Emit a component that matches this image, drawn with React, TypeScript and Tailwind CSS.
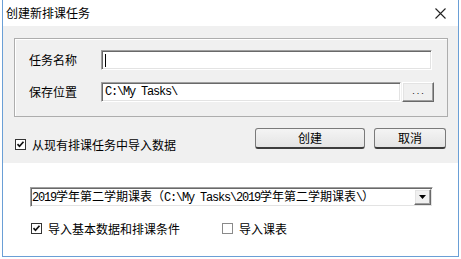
import React from "react";

const cjk = { fontFamily: '"Noto Sans CJK SC", "Microsoft YaHei", sans-serif' };

function Mono({ children }: { children: React.ReactNode }) {
  return (
    <span className="tracking-[-1.2px]" style={{ fontFamily: '"Liberation Mono", monospace' }}>
      {children}
    </span>
  );
}

function Check({ checked }: { checked: boolean }) {
  return (
    <div
      className={`w-[11px] h-[11px] bg-white border flex items-center justify-center shrink-0 ${
        checked ? "border-[#333333]" : "border-[#8a8a8a]"
      }`}
    >
      {checked && (
        <svg width="9" height="9" viewBox="0 0 9 9">
          <path d="M1.5 4.2 L3.5 6.3 L7.5 1.8" stroke="#111" strokeWidth="1.7" fill="none" />
        </svg>
      )}
    </div>
  );
}

const sunken =
  "bg-white border border-t-[#a0a0a0] border-l-[#a0a0a0] border-b-white border-r-white shadow-[inset_1px_1px_0_#696969,inset_-1px_-1px_0_#e3e3e3]";

const raised =
  "bg-[#f0f0f0] border border-t-white border-l-white border-b-[#696969] border-r-[#696969] shadow-[inset_-1px_-1px_0_#a0a0a0,inset_1px_1px_0_#e3e3e3]";

export default function App() {
  return (
    <div className="w-[461px] h-[259px] bg-white text-[12px] text-black leading-none" style={cjk}>
      <div className="ml-[2px] w-[457px] h-[257px] border-l border-r border-b border-[#6a9fd6] flex flex-col">
        {/* title bar */}
        <div className="h-[26px] bg-white flex items-center justify-between pl-[3px] pr-[12px]">
          <span className="text-[12px] leading-none">创建新排课任务</span>
          <svg width="11" height="11" viewBox="0 0 11 11">
            <path d="M0.5 0.5 L10.5 10.5 M10.5 0.5 L0.5 10.5" stroke="#222" strokeWidth="1.1" />
          </svg>
        </div>

        {/* gray section */}
        <div className="h-[137px] bg-[#f0f0f0] flex flex-col">
          <div className="ml-[11px] mt-[12px] w-[434px] h-[79px] border border-[#adadad] shadow-[inset_1px_1px_0_#fff] flex flex-col pt-[11px] pl-[14px]">
            <div className="flex items-center h-[20px]">
              <span className="w-[72px]">任务名称</span>
              <div className={`w-[331px] h-[20px] ${sunken} flex items-center pl-[3px]`}>
                <div className="w-[1px] h-[13px] bg-black" />
              </div>
            </div>
            <div className="flex items-center h-[20px] mt-[12px]">
              <span className="w-[72px]">保存位置</span>
              <div className={`w-[300px] h-[20px] ${sunken} flex items-center pl-[3px] text-[12px]`}>
                <Mono>C:\My Tasks\</Mono>
              </div>
              <div className={`ml-[1px] w-[32px] h-[20px] ${raised} flex items-center justify-center`}>
                <span className="text-[9px] tracking-[2px] pl-[2px] -mt-[2px] text-black" style={{ fontFamily: '"Liberation Sans", sans-serif' }}>
                  ...
                </span>
              </div>
            </div>
          </div>

          <div className="flex">
            <div className="ml-[12px] mt-[22px] flex items-center h-[11px]">
              <Check checked />
              <span className="ml-[6px]">从现有排课任务中导入数据</span>
            </div>
            <div className="ml-[79px] mt-[11px] flex gap-[9px]">
              <div className="w-[110px] h-[21px] rounded-[3px] border border-[#7a7a7a] border-b-2 border-b-[#3c3c3c] bg-gradient-to-b from-[#f4f4f4] to-[#e4e4e4] flex items-center justify-center">
                创建
              </div>
              <div className="w-[72px] h-[21px] rounded-[3px] border border-[#7a7a7a] border-b-2 border-b-[#3c3c3c] bg-gradient-to-b from-[#f4f4f4] to-[#e4e4e4] flex items-center justify-center">
                取消
              </div>
            </div>
          </div>
        </div>

        {/* white section */}
        <div className="flex-1 bg-white flex flex-col">
          <div className={`ml-[27px] mt-[24px] w-[403px] h-[20px] ${sunken} flex items-center pl-[1px] pr-[1px]`}>
            <span className="flex-1 whitespace-nowrap">
              <Mono>2019</Mono>学年第二学期课表（<Mono>C:\My Tasks\2019</Mono>学年第二学期课表<Mono>\</Mono>）
            </span>
            <div className={`w-[17px] h-[16px] ${raised} flex items-center justify-center`}>
              <svg width="7" height="4" viewBox="0 0 7 4">
                <path d="M0 0 H7 L3.5 4 Z" fill="#000" />
              </svg>
            </div>
          </div>
          <div className="flex items-center mt-[16px] h-[11px]">
            <div className="ml-[28px] flex items-center">
              <Check checked />
              <span className="ml-[6px]">导入基本数据和排课条件</span>
            </div>
            <div className="ml-[42px] flex items-center">
              <Check checked={false} />
              <span className="ml-[6px]">导入课表</span>
            </div>
          </div>
        </div>
      </div>
    </div>
  );
}
